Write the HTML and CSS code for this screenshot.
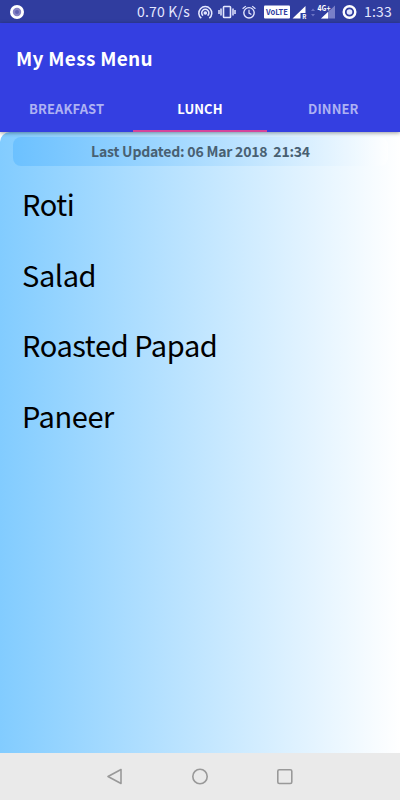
FILE: index.html
```html
<!DOCTYPE html>
<html lang="en">
<head>
    <meta charset="UTF-8">
    <title>My Mess Menu</title>
    <link rel="stylesheet" href="styles.css">
</head>
<body>
<div class="statusbar">
    <svg class="notification" width="16" height="16" viewBox="0 0 16 16">
        <circle cx="8" cy="8" r="5.6" fill="#8582c4" stroke="#fff" stroke-width="2.8"/>
        <circle cx="8" cy="8" r="2" fill="#5f60b1"/>
    </svg>
    <span class="speed">0.70 K/s</span>
    <svg class="icons" width="166" height="24" viewBox="0 0 166 24" fill="none" stroke="#e4e7ff">
        <!-- hotspot -->
        <circle cx="11.3" cy="13" r="1.8" fill="#e4e7ff" stroke="none"/>
        <path d="M7.3 18.2A6.5 6.5 0 1 1 15.3 18.2M9 15.7A3.6 3.6 0 1 1 13.6 15.7" stroke-width="1.5"/>
        <!-- vibrate -->
        <rect x="29.5" y="6.5" width="7" height="11" rx=".7" stroke-width="1.6"/>
        <path d="M27 8.5v7M39 8.5v7M25 10v4M41 10v4" stroke-width="1.5"/>
        <!-- alarm -->
        <circle cx="55" cy="12.8" r="5.2" stroke-width="1.4"/>
        <path d="M55 9.7v3.4l2.4 1.5M48.6 8.8l3.2-2.7M61.4 8.8l-3.2-2.7" stroke-width="1.2"/>
        <!-- volte -->
        <rect x="70" y="5.5" width="26" height="13" rx="1" fill="#fff" stroke="none"/>
        <text class="volte" x="72" y="15.2" textLength="22" lengthAdjust="spacingAndGlyphs">VoLTE</text>
        <!-- signal 1 -->
        <path d="M98.5 18.5L111.5 6v7h-5v5.5z" fill="#fff" stroke="none"/>
        <text class="small" x="108.2" y="18.8">R</text>
        <path d="M117 11l2-2.5 2 2.5zM117 14l2 2.5 2-2.5z" fill="#6972c3" stroke="none"/>
        <!-- signal 2 -->
        <path d="M127 18.5L141 5.5v13z" fill="#7a80c8" stroke="none"/>
        <path d="M127 18.5l7-6.5v6.5z" fill="#fff" stroke="none"/>
        <text class="small network" x="123.5" y="10.8" textLength="13" lengthAdjust="spacingAndGlyphs">4G+</text>
        <!-- battery -->
        <circle cx="155.5" cy="12" r="5.8" stroke="#fff" stroke-width="2.4"/>
        <circle cx="155.5" cy="12" r="2.8" fill="#e4e7ff" stroke="none"/>
    </svg>
    <span class="clock">1:33</span>
</div>

<div class="header">
    <h1 class="title">My Mess Menu</h1>
    <div class="tabs">
        <div class="tab">BREAKFAST</div>
        <div class="tab active">LUNCH</div>
        <div class="tab">DINNER</div>
    </div>
</div>

<div class="content">
    <div class="menu">
        <div class="updated">Last Updated: 06 Mar 2018&nbsp; 21:34</div>
        <ul class="items">
            <li>Roti</li>
            <li>Salad</li>
            <li>Roasted Papad</li>
            <li>Paneer</li>
        </ul>
    </div>
</div>

<div class="navbar">
    <svg width="240" height="47" viewBox="80 753 240 47" fill="none" stroke="#999" stroke-width="1.6" stroke-linejoin="round">
        <path d="M108 776.5l13-7v14z"/>
        <circle cx="200" cy="776.5" r="7.2"/>
        <rect x="277.8" y="769.7" width="14" height="13.8" rx="1.5"/>
    </svg>
</div>
</body>
</html>
```

FILE: styles.css
```css
*{
    margin: 0;
    padding: 0;
    box-sizing: border-box;
}
body{
    width: 400px;
    height: 800px;
    overflow: hidden;
    display: flex;
    flex-direction: column;
    font-family: "Noto Sans CJK SC", "Noto Sans", sans-serif;
    background-color: #fff;
}
svg{
    display: block;
    flex: none;
}

/*status bar*/
.statusbar{
    height: 23px;
    display: flex;
    align-items: center;
    padding: 0 8px 0 9px;
    background-color: #303d9f;
    color: #e4e7ff;
    font-size: 14px;
    line-height: 23px;
    white-space: nowrap;
}
.speed{
    width: 57px;
    margin-left: 112px;
    letter-spacing: 0.2px;
}
.clock{
    margin-left: 4px;
    letter-spacing: 0.2px;
}
.icons text{
    stroke: none;
    font-weight: bold;
}
.volte{
    fill: #303d9f;
    font-size: 8px;
}
.small{
    fill: #fff;
    font-size: 6px;
}
.network{
    font-size: 8px;
}

/*header*/
.header{
    position: relative;
    height: 109px;
    background-color: #343fe1;
    color: #fff;
    box-shadow: 0 1px 4px rgba(0,0,0,0.4);
}
.title{
    height: 72px;
    padding-left: 16px;
    font-size: 19px;
    line-height: 69px;
    font-weight: bold;
    letter-spacing: 0.3px;
}
.tabs{
    display: flex;
    height: 37px;
}
.tab{
    flex: 1;
    text-align: center;
    font-size: 13px;
    line-height: 27px;
    font-weight: bold;
    letter-spacing: 0.1px;
    color: #aeb2f3;
}
.active{
    color: #fff;
    border-bottom: 2px solid #d4449b;
}

/*content*/
.content{
    flex: 1;
    background-color: #fff;
}
.menu{
    height: 100%;
    padding: 5px 12px 0 13px;
    border-radius: 10px 10px 0 0;
    background-image: linear-gradient(to right, #82ccff, #fff);
}
.updated{
    height: 29px;
    border-radius: 8px;
    background-image: linear-gradient(to right, #6cc1ff, rgba(255,255,255,0.7));
    text-align: center;
    font-size: 14px;
    line-height: 29px;
    font-weight: bold;
    letter-spacing: -0.2px;
    color: #486072;
}
.items{
    list-style: none;
    padding: 2px 0 0 9px;
}
.items li{
    height: 70.5px;
    font-size: 29px;
    line-height: 70px;
    letter-spacing: -0.4px;
    color: #000;
}

/*navigation bar*/
.navbar{
    height: 47px;
    display: flex;
    justify-content: center;
    background-color: #eaeaea;
}
```
